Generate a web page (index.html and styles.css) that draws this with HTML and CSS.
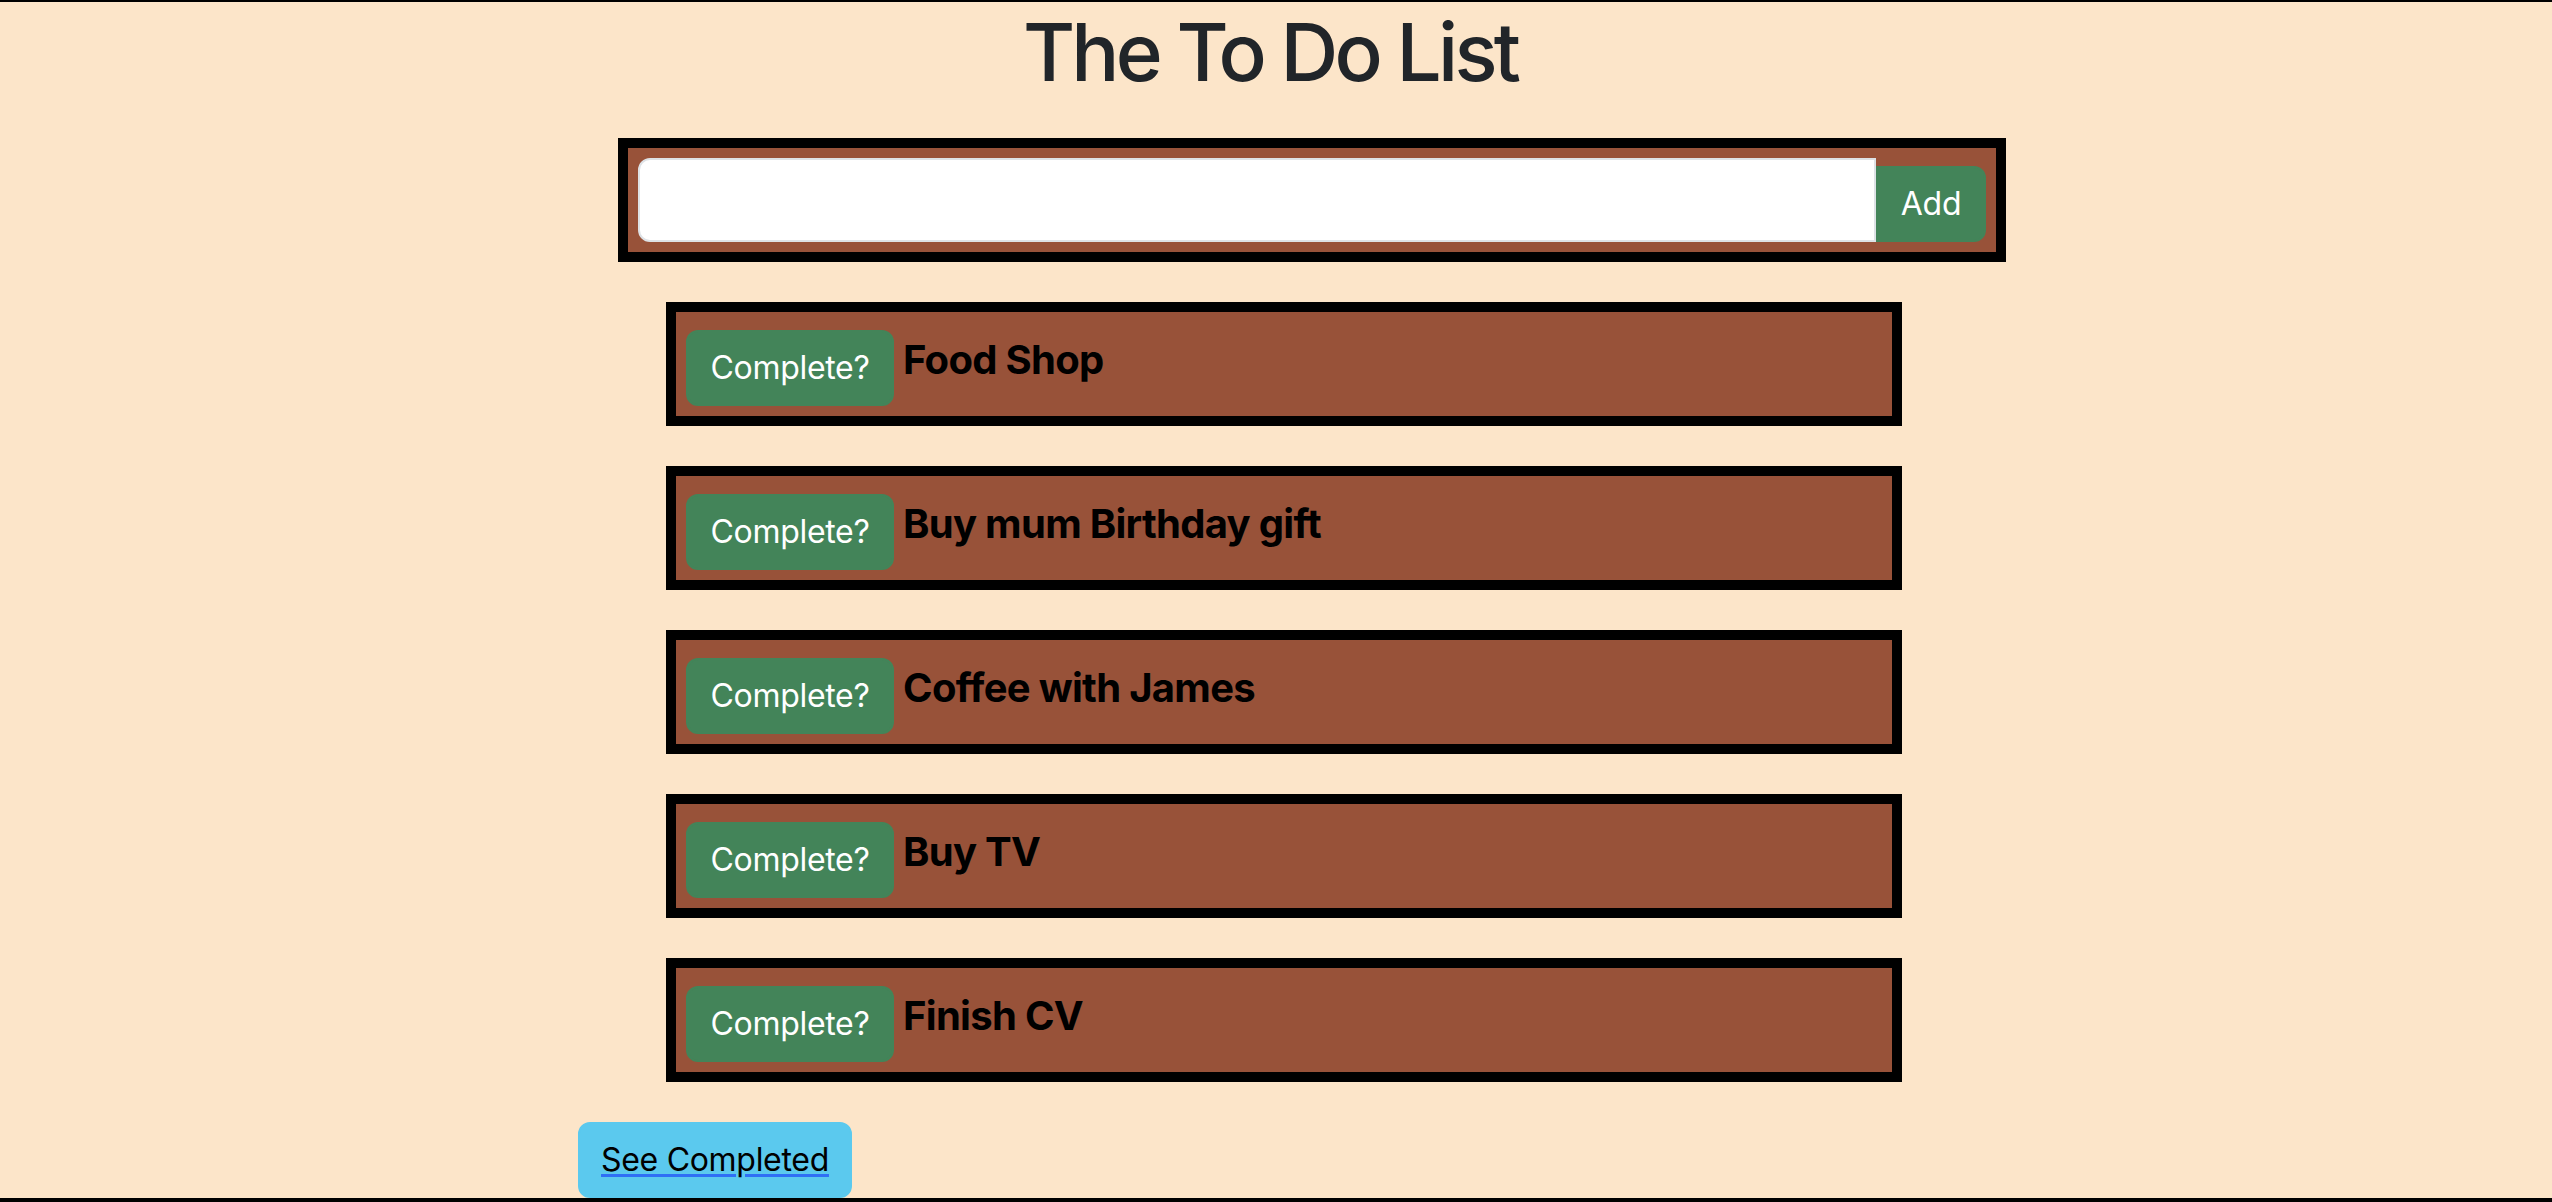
FILE: index.html
```html
<!DOCTYPE html>
<html lang="en">
<head>
<meta charset="utf-8">
<title>The To Do List</title>
<link rel="stylesheet" href="styles.css">
</head>
<body>
<h1 class="title">The To Do List</h1>
<form class="add-box">
  <input class="add-input" type="text" aria-label="New task">
  <button class="btn btn-green add-btn" type="button">Add</button>
</form>
<ul class="todo-list">
  <li class="todo"><button class="btn btn-green complete-btn" type="button">Complete?</button><h5 class="todo-text">Food Shop</h5></li>
  <li class="todo"><button class="btn btn-green complete-btn" type="button">Complete?</button><h5 class="todo-text">Buy mum Birthday gift</h5></li>
  <li class="todo"><button class="btn btn-green complete-btn" type="button">Complete?</button><h5 class="todo-text">Coffee with James</h5></li>
  <li class="todo"><button class="btn btn-green complete-btn" type="button">Complete?</button><h5 class="todo-text">Buy TV</h5></li>
  <li class="todo"><button class="btn btn-green complete-btn" type="button">Complete?</button><h5 class="todo-text">Finish CV</h5></li>
</ul>
<div class="footer-row">
  <a class="btn see-completed" href="#">See Completed</a>
</div>
<div class="frame-bottom"></div>
</body>
</html>
```

FILE: styles.css
```css
html, body {
  margin: 0;
  padding: 0;
}

body {
  background: #fce5c9;
  border-top: 2px solid #000;
  font-family: Inter, "Liberation Sans", sans-serif;
  color: #212529;
  min-height: 1200px;
  box-sizing: border-box;
}

.title {
  margin: 0;
  padding: 2px 12px 0 0;
  text-align: center;
  font-size: 80px;
  line-height: 96px;
  font-weight: 500;
  letter-spacing: -3.8px;
  color: #212529;
}

.add-box {
  margin: 38px 0 0 618px;
  width: 1388px;
  box-sizing: border-box;
  border: 10px solid #000;
  padding: 10px;
  background: #985239;
  display: flex;
  align-items: flex-end;
}

.add-input {
  flex: 1;
  min-width: 0;
  height: 84px;
  box-sizing: border-box;
  border: 2px solid #dee2e6;
  border-radius: 12px 0 0 12px;
  background: #fff;
  font-family: inherit;
  font-size: 32px;
  padding: 0 24px;
  margin: 0;
  outline: none;
}

.btn {
  box-sizing: border-box;
  height: 76px;
  padding: 12px 24px;
  font-family: Inter, "Liberation Sans", sans-serif;
  font-size: 32px;
  line-height: 48px;
  font-weight: 400;
  letter-spacing: -0.3px;
  border: 2px solid transparent;
  border-radius: 12px;
  margin: 0;
  white-space: nowrap;
  cursor: pointer;
}

.btn-green {
  background: #438459;
  border-color: #438459;
  color: #fff;
}

.add-btn {
  width: 110px;
  padding: 12px 0;
  border-radius: 0 12px 12px 0;
}

.todo-list {
  list-style: none;
  margin: 40px 0 0;
  padding: 0;
  display: flex;
  flex-direction: column;
  gap: 40px;
}

.todo {
  margin-left: 666px;
  width: 1236px;
  height: 124px;
  box-sizing: border-box;
  border: 10px solid #000;
  padding: 10px;
  background: #985239;
  display: flex;
  align-items: flex-end;
}

.complete-btn {
  width: 208px;
  padding: 12px 0;
  flex-shrink: 0;
}

.todo-text {
  align-self: flex-start;
  margin: 14px 0 0 9px;
  font-size: 40px;
  line-height: 48px;
  font-weight: 700;
  letter-spacing: -0.7px;
  color: #000;
}

.footer-row {
  margin-top: 40px;
  padding-left: 578px;
}

.see-completed {
  display: block;
  width: 274px;
  padding: 12px 0;
  text-align: center;
  background: #5bc9ee;
  border-color: #5bc9ee;
  color: #000;
  text-decoration-line: underline;
  text-decoration-color: #2f6ff5;
  text-decoration-thickness: 3px;
  text-underline-offset: 3px;
}

.frame-bottom {
  position: fixed;
  left: 0;
  right: 0;
  bottom: 0;
  height: 4px;
  background: #000;
}
```
